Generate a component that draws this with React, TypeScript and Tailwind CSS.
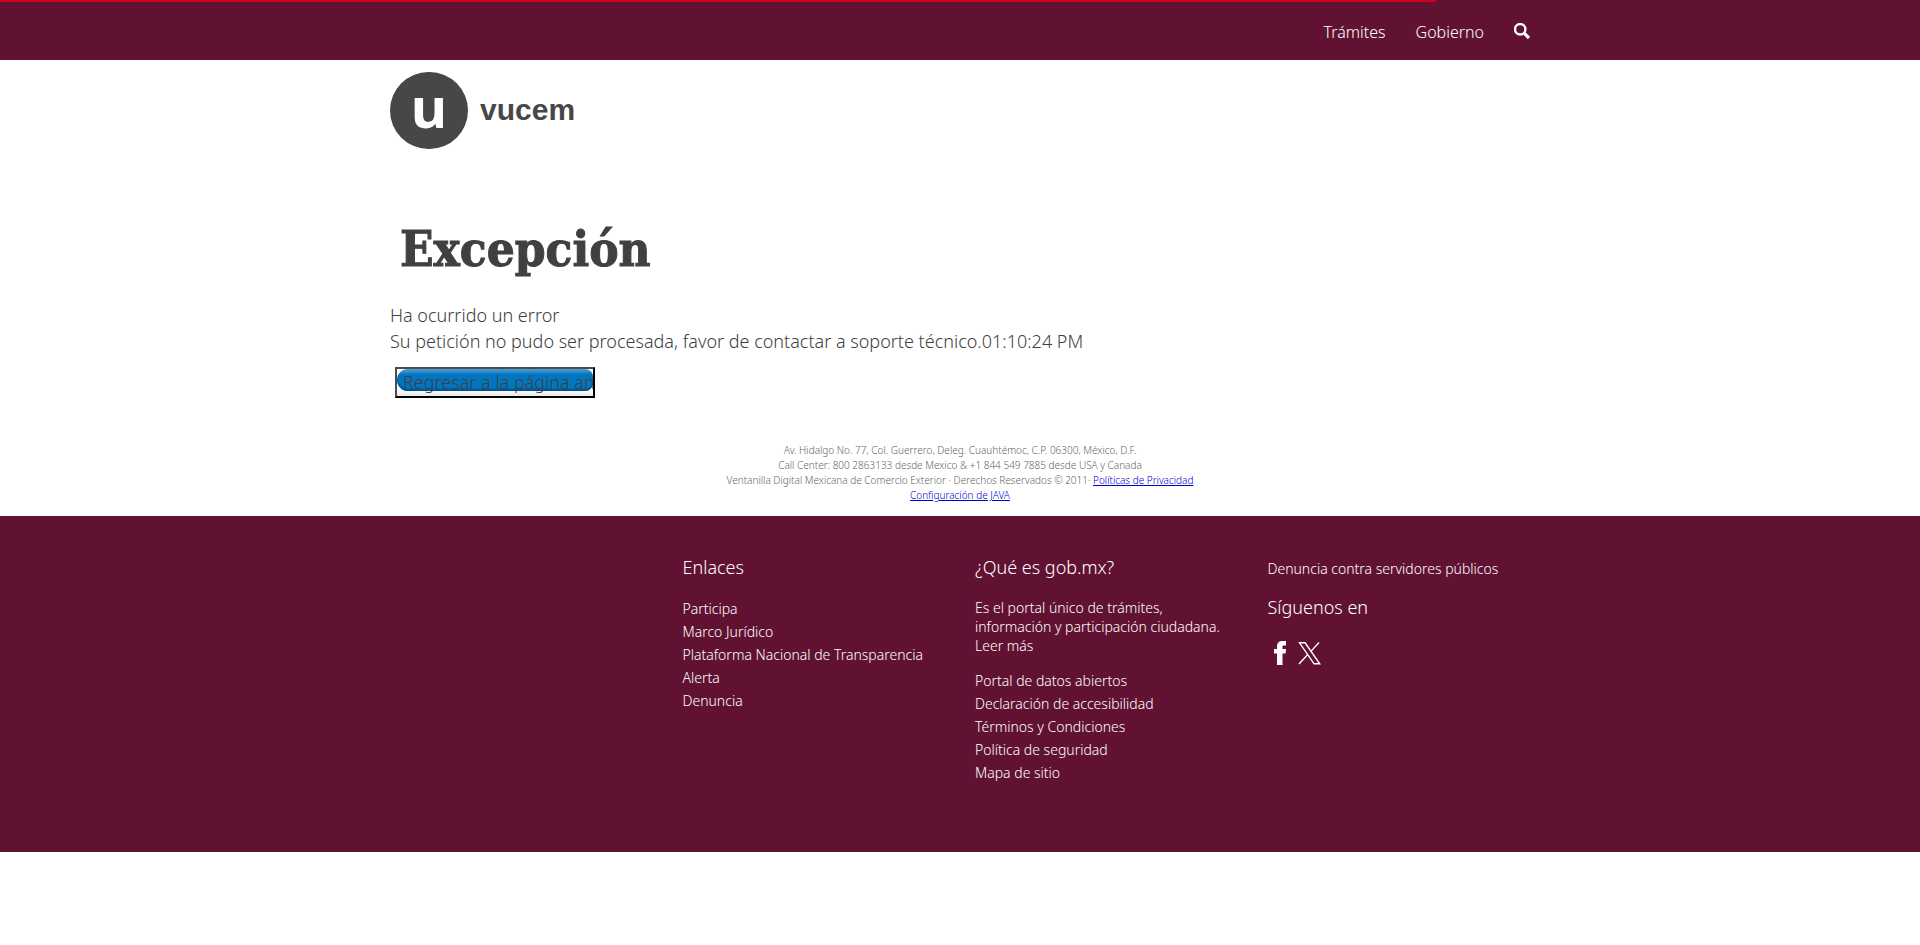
const enlaces = ["Participa", "Marco Jurídico", "Plataforma Nacional de Transparencia", "Alerta", "Denuncia"];

const portal = [
  "Portal de datos abiertos",
  "Declaración de accesibilidad",
  "Términos y Condiciones",
  "Política de seguridad",
  "Mapa de sitio",
];

function LinkList({ items }: { items: string[] }) {
  return (
    <ul className="text-sm leading-[23px]">
      {items.map((item) => (
        <li key={item}>
          <a href="#">{item}</a>
        </li>
      ))}
    </ul>
  );
}

function Header() {
  return (
    <header className="bg-[#611232] font-light text-white">
      <div className="h-0.5">
        <div className="h-full w-[74.8%] bg-[#d0021b]" />
      </div>
      <nav className="mx-auto flex h-[58px] max-w-[1170px] items-center justify-end gap-[30px] px-3.5 text-base">
        <a href="#" className="pt-0.5">Trámites</a>
        <a href="#" className="pt-0.5">Gobierno</a>
        <a href="#" aria-label="Buscar">
          <svg viewBox="0 0 17 17" className="h-[17px] w-[17px]" fill="none" stroke="currentColor">
            <circle cx="6.2" cy="6.3" r="5.2" strokeWidth="2.4" />
            <path d="M10.1 10.2 15 15" strokeWidth="3.200" />
          </svg>
        </a>
      </nav>
    </header>
  );
}

function Logo() {
  return (
    <a href="#" className="flex items-center gap-3 text-[#474747]">
      <span className="flex h-[77px] w-[78px] justify-center rounded-full bg-[#474747] font-['Open_Sans',sans-serif] text-[56px] leading-[68px] font-bold text-white">
        u
      </span>
      <span className="pb-0.5 font-['Liberation_Sans',sans-serif] text-[30px] leading-none font-bold">vucem</span>
    </a>
  );
}

function Footer() {
  return (
    <footer className="border-b-[5px] border-[#5d1130] bg-[#611232] font-light text-white">
      <div className="mx-auto grid min-h-[331px] max-w-[1170px] grid-cols-4 pt-[39px]">
        <div />
        <section className="px-[15px]">
          <h2 className="mb-[18px] text-lg leading-6 font-light">Enlaces</h2>
          <LinkList items={enlaces} />
        </section>
        <section className="px-[15px]">
          <h2 className="mb-[19px] text-lg leading-6 font-light">¿Qué es gob.mx?</h2>
          <p className="mb-3.5 text-sm leading-[19px]">
            Es el portal único de trámites, información y participación ciudadana. <a href="#">Leer más</a>
          </p>
          <LinkList items={portal} />
        </section>
        <section className="px-[15px]">
          <a href="#" className="block text-sm leading-[27px]">Denuncia contra servidores públicos</a>
          <h2 className="mt-[13px] text-lg leading-6 font-light">Síguenos en</h2>
          <div className="mt-[22px] flex gap-3 pl-1.5">
            <a href="#" aria-label="Facebook">
              <svg viewBox="0 0 12 24" className="h-6 w-3" fill="currentColor">
                <path d="M12 0v4.500H9.700C8.700 4.500 8.500 5 8.500 6V8H12l-.4 4.500H8.500V24h-5.500V12.500H0V8h3V5.500C3 1.900 4.800 0 8.300 0z" />
              </svg>
            </a>
            <a href="#" aria-label="X">
              <svg viewBox="0 0 24 24" className="h-6 w-6" fill="none" stroke="currentColor" strokeWidth="1.400">
                <path d="M1.500 1.800h5.600L21.700 22.800h-5.600zM21 1.500l-8.300 9.100M1 23l9-9.800" />
              </svg>
            </a>
          </div>
        </section>
      </div>
    </footer>
  );
}

export default function App() {
  return (
    <div className="bg-white font-['Noto_Sans',sans-serif]">
      <Header />
      <main className="mx-auto max-w-[1170px] px-[15px] pt-3 text-lg leading-[26px] font-light text-[#404041]">
        <Logo />
        <h1 className="mt-[72px] mb-[25px] ml-2.5 font-['DejaVu_Serif_Condensed','DejaVu_Serif',serif] text-[49px] leading-[56px] font-bold [-webkit-text-stroke:1px_#404041]">
          Excepción
        </h1>
        <p>Ha ocurrido un error</p>
        <p>Su petición no pudo ser procesada, favor de contactar a soporte técnico.01:10:24 PM</p>
        <button
          type="button"
          className="mt-[13px] ml-[5px] flex h-[31px] w-[200px] items-start overflow-hidden border-2 border-t-[#4c4c4c] border-r-black border-b-black border-l-[#4c4c4c] bg-linear-to-b from-white from-75% to-[#e8e8e8] text-left"
        >
          <span className="h-[22px] w-full min-w-0 rounded-l-[11px] rounded-r-lg bg-linear-to-b from-[#4a9fd6] via-[#0076c0] via-25% to-[#0076c0] pl-1.5 leading-[27px] whitespace-nowrap shadow-[inset_0_-2px_2px_#004f8a]">
            Regresar a la página anterior
          </span>
        </button>
      </main>
      <div className="mt-[45px] pb-[13px] text-center text-[10px] leading-[15px] font-light text-[#666]">
        <p>Av. Hidalgo No. 77, Col. Guerrero, Deleg. Cuauhtémoc, C.P. 06300, México, D.F.</p>
        <p>Call Center: 800 2863133 desde Mexico &amp; +1 844 549 7885 desde USA y Canada</p>
        <p>
          Ventanilla Digital Mexicana de Comercio Exterior · Derechos Reservados © 2011·{" "}
          <a href="#" className="text-[#0000cc] underline">Políticas de Privacidad</a>
        </p>
        <p>
          <a href="#" className="text-[#0000cc] underline">Configuración de JAVA</a>
        </p>
      </div>
      <Footer />
    </div>
  );
}
